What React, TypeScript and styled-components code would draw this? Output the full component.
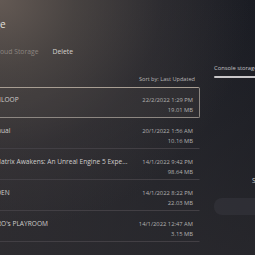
import React from "react"
import styled, { createGlobalStyle } from "styled-components"

const GlobalStyle = createGlobalStyle`
  html, body {
    margin: 0;
    padding: 0;
    width: 255px;
    height: 255px;
    overflow: hidden;
    background: #1d1e24;
  }
  body {
    font-family: "Open Sans", "Noto Sans", sans-serif;
  }
`

const Screen = styled.div`
  width: 255px;
  height: 255px;
  overflow: hidden;
  display: flex;
  background:
    radial-gradient(ellipse 250px 230px at 0px 0px, rgba(112, 100, 92, 0.8) 0%, rgba(92, 84, 78, 0.6) 30%, rgba(66, 61, 62, 0.35) 65%, rgba(40, 38, 42, 0) 100%),
    linear-gradient(180deg, rgba(24, 26, 33, 0) 0%, rgba(44, 43, 47, 0.7) 100%),
    linear-gradient(90deg, #302e32 0%, #23242a 55%, #1a1c23 100%);
`

const Main = styled.div`
  width: 200px;
  flex-shrink: 0;
  display: flex;
  flex-direction: column;
`

// keeps the start of a text outside the left edge of the screen
const Cut = styled.span`
  display: inline-flex;
  justify-content: flex-end;
  width: 0;
  white-space: nowrap;
`

const Title = styled.div`
  margin-top: 17px;
  height: 14px;
  font-size: 10px;
  line-height: 14px;
  color: #e4e0dc;
  white-space: nowrap;
`

const Tabs = styled.div`
  display: flex;
  gap: 14px;
  margin-top: 14px;
  height: 12px;
  align-items: center;
`

const Tab = styled.span<{ active?: boolean }>`
  font-size: 6.8px;
  color: ${p => (p.active ? "#d6d2ce" : "#8c8580")};
  white-space: nowrap;
`

const SortBar = styled.div`
  display: flex;
  justify-content: flex-end;
  padding-right: 5px;
  margin-top: 17px;
  font-size: 5.6px;
  color: #b8b6b6;
  height: 10px;
  line-height: 10px;
`

const List = styled.div`
  margin-top: 3px;
  display: flex;
  flex-direction: column;
`

const Row = styled.div<{ selected?: boolean }>`
  height: 31px;
  box-sizing: border-box;
  display: flex;
  justify-content: space-between;
  align-items: flex-start;
  padding: 7px 6px 0 10px;
  margin-left: -10px;
  border: 1px solid ${p => (p.selected ? "#8d8782" : "transparent")};
  border-top-color: ${p => (p.selected ? "#a89e93" : "transparent")};
  border-bottom-color: ${p => (p.selected ? "#8d8782" : "#423f44")};
  border-radius: ${p => (p.selected ? "2px" : "0")};
  background: ${p => (p.selected ? "rgba(70, 66, 66, 0.25)" : "transparent")};
`

const GameName = styled.div`
  font-size: 6.6px;
  line-height: 9px;
  color: #cfcdcc;
  white-space: nowrap;
`

const Meta = styled.div`
  display: flex;
  flex-direction: column;
  align-items: flex-end;
  font-size: 5.8px;
  line-height: 10px;
  color: #b3b1b1;
  white-space: nowrap;
`

const Side = styled.div`
  margin-left: 14px;
  width: 60px;
  flex-shrink: 0;
  display: flex;
  flex-direction: column;
  padding-top: 64px;
`

const SideLabel = styled.div`
  font-size: 5.8px;
  line-height: 8px;
  color: #c4c2c4;
  white-space: nowrap;
`

const StorageBar = styled.div`
  margin-top: 4px;
  height: 2px;
  border-radius: 1px;
  background: #c9c7c9;
`

const SideNote = styled.div`
  margin-top: 98px;
  padding-left: 38px;
  font-size: 6.6px;
  color: #d2d0d0;
  white-space: nowrap;
`

const Pill = styled.div`
  margin-top: 13px;
  height: 17px;
  border-radius: 8px 0 0 8px;
  background: rgba(54, 55, 62, 0.55);
`

const games = [
  { hidden: "DEATH", shown: "LOOP", date: "22/2/2022  1:29 PM", size: "19.01 MB", selected: true },
  { hidden: "User's Man", shown: "ual", date: "20/1/2022  1:56 AM", size: "10.16 MB" },
  { hidden: "The M", shown: "atrix Awakens: An Unreal Engine 5 Expe...", date: "14/1/2022  9:42 PM", size: "98.64 MB" },
  { hidden: "FINAL FANTASY VII REMAKE: ED", shown: "EN", date: "14/1/2022  8:22 PM", size: "22.03 MB" },
  { hidden: "ASTR", shown: "O's PLAYROOM", date: "14/1/2022  12:47 AM", size: "3.15 MB" }
]

export default function App() {
  return (
    <>
      <GlobalStyle />
      <Screen>
        <Main>
          <Title>
            <Cut>Saved Data Storag</Cut>e
          </Title>
          <Tabs>
            <Tab>
              <Cut>Console Storage&nbsp;&nbsp;&nbsp;&nbsp;Cl</Cut>oud Storage
            </Tab>
            <Tab active>Delete</Tab>
          </Tabs>
          <SortBar>Sort by: Last Updated</SortBar>
          <List>
            {games.map(g => (
              <Row key={g.shown} selected={g.selected}>
                <GameName>
                  <Cut>{g.hidden}</Cut>
                  {g.shown}
                </GameName>
                <Meta>
                  <span>{g.date}</span>
                  <span>{g.size}</span>
                </Meta>
              </Row>
            ))}
          </List>
        </Main>
        <Side>
          <SideLabel>Console storage</SideLabel>
          <StorageBar />
          <SideNote>S</SideNote>
          <Pill />
        </Side>
      </Screen>
    </>
  )
}
